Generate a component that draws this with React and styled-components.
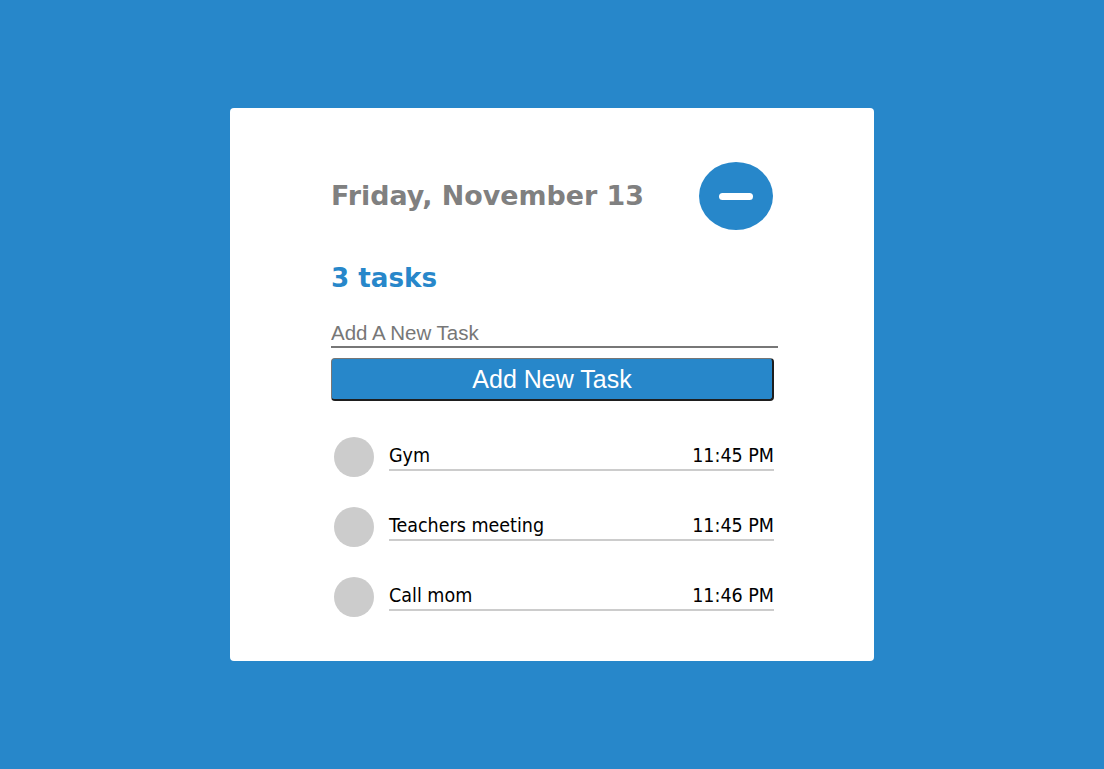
import React from "react";
import styled, { createGlobalStyle } from "styled-components";

const Global = createGlobalStyle`
  html, body { margin: 0; padding: 0; }
  body {
    background: #2787ca;
    font-family: "DejaVu Sans", Verdana, sans-serif;
  }
`;

const Page = styled.div`
  min-height: 100vh;
  display: flex;
  align-items: center;
  justify-content: center;
`;

const Card = styled.div`
  width: 644px;
  box-sizing: border-box;
  background: #fff;
  border-radius: 4px;
  padding: 54px 100px 44px 101px;
`;

const Header = styled.div`
  display: flex;
  align-items: center;
  justify-content: space-between;
  height: 68px;
`;

const DateTitle = styled.h1`
  margin: 0;
  font-family: "DejaVu Sans", Verdana, sans-serif;
  font-weight: bold;
  font-size: 26.9px;
  line-height: 30px;
  color: #808080;
`;

const MinusButton = styled.button`
  width: 74px;
  height: 68px;
  margin-right: 1px;
  border: none;
  border-radius: 50%;
  background: #2787ca;
  display: flex;
  align-items: center;
  justify-content: center;
  padding: 0;
  cursor: pointer;
`;

const MinusBar = styled.span`
  display: block;
  width: 34px;
  height: 7px;
  border-radius: 4px;
  background: #fff;
`;

const Count = styled.h2`
  margin: 33px 0 0;
  font-family: "DejaVu Sans", Verdana, sans-serif;
  font-weight: bold;
  font-size: 26.2px;
  line-height: 30px;
  color: #2787ca;
`;

const TaskInput = styled.input`
  display: block;
  margin-top: 27px;
  width: calc(100% + 4px);
  box-sizing: border-box;
  height: 28px;
  padding: 0;
  border: none;
  border-bottom: 2px solid #777;
  font-family: "Liberation Sans", Arial, sans-serif;
  font-size: 20.5px;
  line-height: 26px;
  color: #333;
  outline: none;
  background: transparent;
  &::placeholder { color: #777; }
`;

const AddButton = styled.button`
  display: block;
  margin-top: 10px;
  width: 100%;
  height: 43px;
  box-sizing: border-box;
  background: #2787ca;
  color: #fff;
  border-style: solid;
  border-width: 1px 2px 2px 1px;
  border-color: #767676 #1e1e1e #1e1e1e #767676;
  border-radius: 4px;
  font-family: "Liberation Sans", Arial, sans-serif;
  font-size: 25px;
  cursor: pointer;
`;

const List = styled.ul`
  list-style: none;
  margin: 36px 0 0;
  padding: 0;
  display: flex;
  flex-direction: column;
  gap: 30px;
`;

const Row = styled.li`
  display: flex;
  align-items: flex-start;
`;

const Check = styled.span`
  width: 40px;
  height: 40px;
  margin-left: 3px;
  border-radius: 50%;
  background: #cccccc;
  flex-shrink: 0;
`;

const RowBody = styled.div`
  flex: 1;
  margin-left: 15px;
  box-sizing: content-box;
  height: 29px;
  padding-bottom: 3px;
  border-bottom: 2px solid #cccccc;
  display: flex;
  align-items: flex-end;
  justify-content: space-between;
  font-family: "DejaVu Sans Condensed", "DejaVu Sans", Verdana, sans-serif;
  font-stretch: condensed;
  font-size: 19.5px;
  line-height: 20px;
  color: #000;
`;

const tasks = [
  { name: "Gym", time: "11:45 PM" },
  { name: "Teachers meeting", time: "11:45 PM" },
  { name: "Call mom", time: "11:46 PM" },
];

export default function App() {
  return (
    <>
      <Global />
      <Page>
        <Card>
          <Header>
            <DateTitle>Friday, November 13</DateTitle>
            <MinusButton aria-label="collapse">
              <MinusBar />
            </MinusButton>
          </Header>
          <Count>3 tasks</Count>
          <TaskInput placeholder="Add A New Task" />
          <AddButton>Add New Task</AddButton>
          <List>
            {tasks.map((t) => (
              <Row key={t.name}>
                <Check />
                <RowBody>
                  <span>{t.name}</span>
                  <span>{t.time}</span>
                </RowBody>
              </Row>
            ))}
          </List>
        </Card>
      </Page>
    </>
  );
}
